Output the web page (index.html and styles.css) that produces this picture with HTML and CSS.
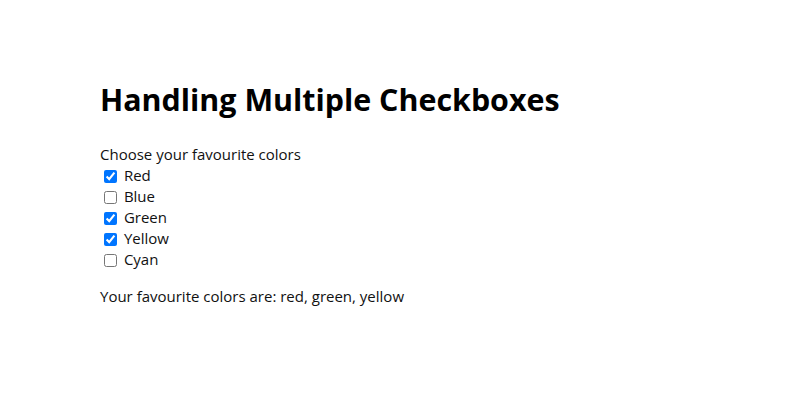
FILE: index.html
```html
<!DOCTYPE html>
<html>
<head>
<meta charset="utf-8">
<link rel="stylesheet" href="styles.css">
</head>
<body>
<div class="app">
  <h1 class="title">Handling Multiple Checkboxes</h1>
  <div class="prompt">Choose your favourite colors</div>
  <div class="options">
    <label class="option"><input type="checkbox" checked> Red</label>
    <label class="option"><input type="checkbox"> Blue</label>
    <label class="option"><input type="checkbox" checked> Green</label>
    <label class="option"><input type="checkbox" checked> Yellow</label>
    <label class="option"><input type="checkbox"> Cyan</label>
  </div>
  <p class="result">Your favourite colors are: red, green, yellow</p>
</div>
</body>
</html>
```
FILE: styles.css
```css
html, body {
  margin: 0;
  padding: 0;
  background: #fff;
}
body {
  font-family: "Open Sans", "Noto Sans", sans-serif;
  font-size: 15px;
  color: #111;
}
.app {
  padding: 80px 100px 0;
}
.title {
  font-size: 30.4px;
  font-weight: 700;
  margin: 0 0 24px;
  line-height: 40px;
  color: #000;
}
.prompt {
  line-height: 21px;
}
.options {
  display: flex;
  flex-direction: column;
}
.option {
  display: block;
  line-height: 21px;
}
.option input {
  margin: 3px 3px 3px 4px;
  vertical-align: -2px;
}
.result {
  margin: 16px 0 0;
  line-height: 21px;
}
```
